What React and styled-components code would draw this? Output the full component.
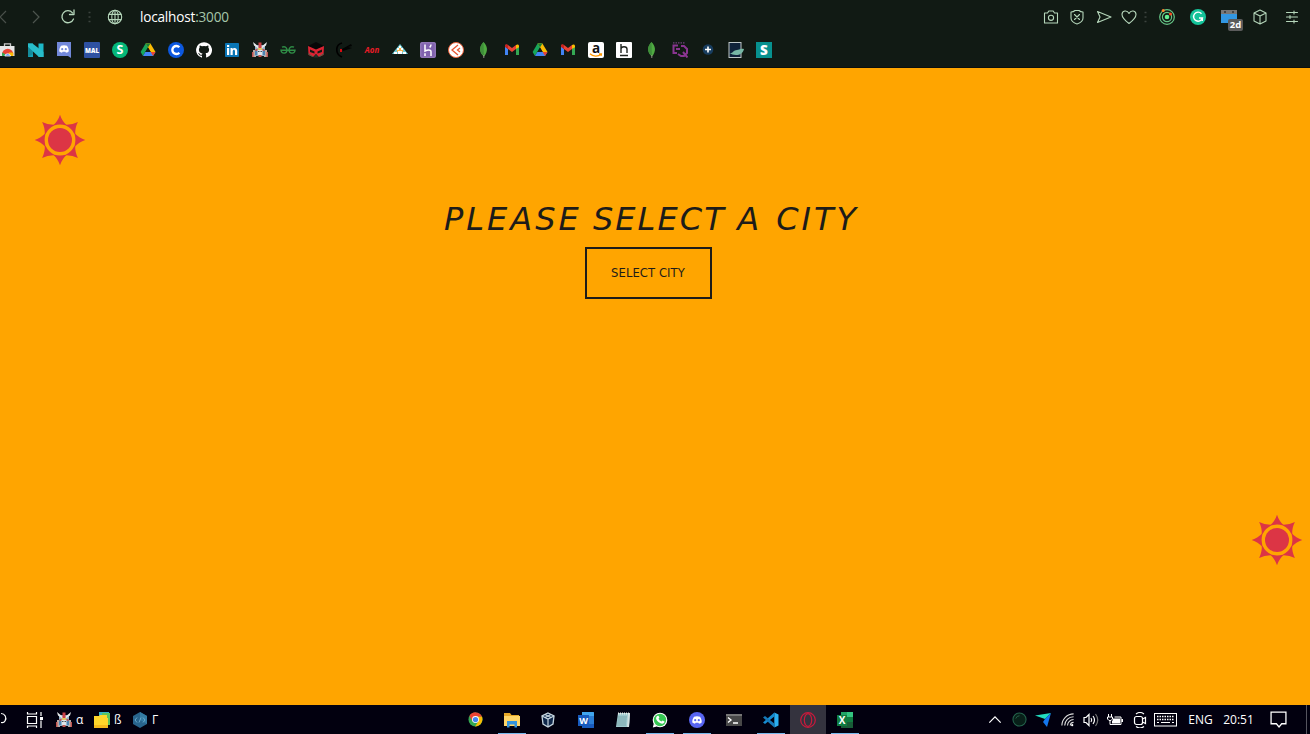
import React from "react";
import styled, { createGlobalStyle } from "styled-components";

const GlobalStyle = createGlobalStyle`
  * { box-sizing: border-box; }
  body { margin: 0; overflow: hidden; font-family: "Open Sans", "Noto Sans", sans-serif; }
  svg { display: block; flex: none; }
`;

const Screen = styled.div`
  width: 1310px;
  height: 734px;
  display: flex;
  flex-direction: column;
  overflow: hidden;
  background: #ffa500;
`;

const BrowserBar = styled.header`
  height: 68px;
  flex: none;
  background: #111a14;
  border-bottom: 1px solid #0c0f0c;
`;

const AddressRow = styled.div`
  height: 34px;
  display: flex;
  align-items: center;
  color: #b5d6ba;
`;

const Slot = styled.span`
  width: ${(p) => p.$w}px;
  flex: none;
  display: flex;
  align-items: center;
  justify-content: ${(p) => (p.$end ? "flex-end" : "center")};
`;

const Url = styled.div`
  flex: 1;
  padding-left: 18px;
  font-size: 13.6px;
  line-height: 20px;
  letter-spacing: -0.2px;
  color: #a5c6aa;
  b { font-weight: 400; color: #fff; }
`;

const BadgeWrap = styled.span`
  position: relative;
  width: 16px;
  height: 16px;
`;

const Badge = styled.span`
  position: absolute;
  left: 7px;
  top: 10px;
  width: 15px;
  height: 12px;
  border-radius: 2px;
  background: #5b5b5b;
  color: #fff;
  font: 700 9.5px/12px "Open Sans", sans-serif;
  text-align: center;
`;

const Bookmarks = styled.nav`
  height: 32px;
  display: flex;
  align-items: center;
  gap: 12px;
`;

const Page = styled.main`
  flex: 1;
  display: flex;
  flex-direction: column;
  padding: 46px 7px 0 34px;
  background: #ffa500;
`;

const Prompt = styled.section`
  display: flex;
  flex-direction: column;
  align-items: center;
  padding: 29px 14px 0 0;
  margin-left: -27px;
  height: 348px;
  color: #1d1c19;
`;

const Title = styled.h1`
  margin: 0;
  padding-left: 7px;
  height: 52px;
  font: italic 400 32px/48px "DejaVu Sans", sans-serif;
  letter-spacing: 3px;
  word-spacing: -2px;
  white-space: nowrap;
`;

const Word = styled.span`
  letter-spacing: ${(p) => p.$track}px;
  margin-left: ${(p) => p.$gap || 0}px;
`;

const CityButton = styled.button`
  width: 127px;
  height: 52px;
  border: 2px solid #1d1c19;
  background: transparent;
  color: #1d1c19;
  padding: 0;
  font: 400 11.6px/16px "DejaVu Sans", sans-serif;
  letter-spacing: 0.08px;
`;

const SunRow = styled.div`
  display: flex;
  justify-content: ${(p) => (p.$end ? "flex-end" : "flex-start")};
`;

const Taskbar = styled.footer`
  height: 29px;
  flex: none;
  display: flex;
  background: #02000f;
  color: #fff;
`;

const TaskLeft = styled.div`
  width: 457px;
  display: flex;
  align-items: center;
  font-size: 12px;
`;

const TaskLabel = styled.span`
  width: ${(p) => p.$w}px;
  padding-left: 4px;
  line-height: 16px;
`;

const Apps = styled.div`
  display: flex;
  gap: 1px;
  width: 526px;
`;

const AppButton = styled.div`
  width: 36px;
  height: 29px;
  display: flex;
  align-items: center;
  justify-content: center;
  background: ${(p) => (p.$active ? "#34333e" : "transparent")};
  &::after {
    content: "";
    display: ${(p) => (p.$open ? "block" : "none")};
    width: 28px;
    height: 1px;
    margin-left: -22px;
    margin-right: -6px;
    align-self: flex-end;
    background: #76b9ed;
  }
`;

const Tray = styled.div`
  flex: 1;
  display: flex;
  align-items: center;
  font-size: 12px;
  white-space: nowrap;
`;

const Edge = styled.span`
  margin-left: auto;
  margin-right: 3px;
  width: 1px;
  height: 29px;
  background: #55545e;
`;

const Icon = ({ size = 16, w, h, box, children, ...rest }) => (
  <svg width={w || size} height={h || size} viewBox={box || "0 0 16 16"} fill="none" {...rest}>
    {children}
  </svg>
);

const Line = ({ children, size = 16, ...rest }) => (
  <Icon size={size} stroke="currentColor" strokeWidth="1.1" strokeLinecap="round" strokeLinejoin="round" {...rest}>
    {children}
  </Icon>
);

const Letter = ({ x = 8, y, size, fill = "#fff", weight = 700, family = "Open Sans", children, ...rest }) => (
  <text x={x} y={y} fontSize={size} fill={fill} stroke="none" fontWeight={weight} fontFamily={`${family}, sans-serif`} textAnchor="middle" {...rest}>
    {children}
  </text>
);

const Sun = () => (
  <svg width="52" height="52" viewBox="-26 -26 52 52">
    {[0, 45, 90, 135, 180, 225, 270, 315].map((a) => (
      <path key={a} transform={`rotate(${a})`} d="M0 -25.3Q2 -19 7 -14.5H-7Q-2 -19 0 -25.3Z" fill="#dc3545" />
    ))}
    <circle r="15.4" fill="#ffa500" />
    <circle r="12" fill="#dc3545" />
  </svg>
);

const Robot = ({ size = 16 }) => (
  <Icon size={size}>
    <path d="M1 8h3v7H1zM12 8h3v7h-3z" fill="#b9a9a4" />
    <path d="M3 3h10v11H3z" fill="#8fb2c9" />
    <path d="M3 8h3v5H3zM10 8h3v5h-3z" fill="#4d86b4" />
    <path d="M1 0l6 5v2L2 3.500zM15 0L9 5v2l5-3.500z" fill="#e6e9ea" />
    <path d="M6.500 .500h3V6h-3z" fill="#cc4146" />
    <path d="M3.500 7h2v2h-2zM10.500 7h2v2h-2zM6.500 12h3v3h-3zM0 10h1.500v5H0zM14.500 10H16v5h-1.500z" fill="#c25450" />
    <path d="M5.500 6h5l-1 2h-3z" fill="#e8c35e" />
    <path d="M5.500 8h5v5h-5z" fill="#dfe5e8" />
    <path d="M6 9h1.500v1H6zM8.500 9H10v1H8.500z" fill="#47505a" />
  </Icon>
);

const Drive = () => (
  <Icon>
    <path d="M5.6 1.5h4.8L8 5.6 3 14 .6 10z" fill="#16a65b" />
    <path d="M5.6 1.5h4.8L15.5 10h-4.8z" fill="#fbbc04" />
    <path d="M5.6 1.5h4.8L8 5.6z" fill="#188038" />
    <path d="M5.3 10h10.2L13 14H3z" fill="#4285f4" />
    <path d="M10.7 10h4.8L13 14z" fill="#ea4335" />
    <path d="M8 5.6l2.7 4.4H5.3z" fill="#111a14" />
  </Icon>
);

const Gmail = () => (
  <Icon>
    <path d="M1 4v9h3V7z" fill="#4285f4" />
    <path d="M12 7v6h3V4z" fill="#34a853" />
    <path d="M1 3.8C1 2.3 2.8 2 4 3l4 3 4-3v4l-4 3-4-3z" fill="#ea4335" />
    <path d="M1 3.8C1 2.8 2 2.2 3 2.5l1 .6V7L1 5z" fill="#c5221f" />
    <path d="M12 3c1.3-1 3-.6 3 1v1.3L12 7z" fill="#fbbc04" />
  </Icon>
);

const Leaf = () => (
  <Icon>
    <path d="M7.500 0C11.500 4 12.500 9 8 14.500 2.500 10 3.300 4.400 7.500 0z" fill="#4faa41" />
    <path d="M7.500 0C3.300 4.400 2.500 10 8 14.500z" fill="#3f8f3a" />
    <path d="M7.800 13v3" stroke="#b1aaa0" strokeWidth=".8" />
  </Icon>
);

const discordFace = "M5 4.8C6.8 4 9.2 4 11 4.8c1.4 2 1.9 3.8 1.7 5.7-1 .9-1.8 1.1-2.7 1.2l-.6-1H6.6l-.6 1c-.9-.1-1.8-.4-2.7-1.2-.1-2 .4-3.8 1.7-5.7z";

const bookmarkIcons = [
  <Icon>
    <path d="M0 4h14.5v10H0z" fill="#e6e6e6" />
    <path d="M4.5 4V1.8h6V4" stroke="#c8c8c8" strokeWidth="1.3" />
    <path d="M2 12.500a5.700 5.700 0 0111.400 0z" fill="#ea4335" />
    <path d="M2 14V10.500l3 1.500v2z" fill="#34a853" />
    <path d="M9 10.500h4.200L13.400 14H8z" fill="#fbbc04" />
    <path d="M4.8 14a3 3 0 015.8 0z" fill="#4285f4" stroke="#fff" strokeWidth=".8" />
  </Icon>,
  <Icon>
    <path d="M0 1.500h5V15H0z" fill="#16a3b5" />
    <path d="M10.500 1.500h5V15h-5z" fill="#1db9c8" />
    <path d="M0 1.500h4.500L15.500 10v5H11L0 5z" fill="#28bdca" />
    <path d="M0 5l5 4.600V12L0 15z" fill="#158b9a" />
  </Icon>,
  <Icon>
    <path d="M1 0h14v16l-3-2H1z" fill="#7289da" />
    <path transform="translate(0 -1)" d={discordFace} fill="#fff" />
    <circle cx="6.2" cy="7.2" r="1.1" fill="#7289da" /><circle cx="9.8" cy="7.2" r="1.1" fill="#7289da" />
  </Icon>,
  <Icon><rect width="16" height="16" rx="1" fill="#2e51a2" /><Letter y="10.6" size="7.2" weight={800} textLength="14" lengthAdjust="spacingAndGlyphs">MAL</Letter></Icon>,
  <Icon><circle cx="8" cy="8" r="8" fill="#05b779" /><Letter y="12.4" size="12.5">S</Letter></Icon>,
  <Drive />,
  <Icon><circle cx="8" cy="8" r="8" fill="#0c58df" /><path d="M11.3 5.3A4 4 0 1011.3 10.7" stroke="#fff" strokeWidth="2.4" /></Icon>,
  <Icon>
    <path fill="#fff" d="M8 .2A7.9 7.9 0 005.5 15.6c.4.1.5-.2.5-.4v-1.5c-2.2.5-2.7-.9-2.7-.9-.4-.9-.9-1.2-.9-1.2-.7-.5.1-.5.1-.5.8.1 1.2.8 1.2.8.7 1.2 1.900.9 2.300.7.1-.5.3-.9.5-1.100-1.800-.2-3.600-.9-3.600-3.900 0-.9.3-1.600.8-2.100-.1-.2-.4-1 .1-2.100 0 0 .7-.2 2.200.8a7.500 7.500 0 014 0c1.500-1 2.200-.8 2.200-.8.5 1.100.2 1.900.1 2.100.5.5.8 1.200.8 2.100 0 3-1.800 3.700-3.600 3.900.3.300.6.800.6 1.500v2.200c0 .2.1.5.5.4A7.900 7.900 0 008 .2z" />
  </Icon>,
  <Icon><rect x="1" y="1" width="14" height="14" rx=".8" fill="#0a76b6" /><path d="M3 6h2.2v7H3zM3 3h2.2v2H3zM6.500 6h2v1c1.300-2 4.700-1.300 4.700 2v4H11V9.600C11 7 8.700 7.400 8.700 9.500V13H6.500z" fill="#fff" /></Icon>,
  <Robot />,
  <Icon stroke="#2f8d46" strokeWidth="1.4"><path d="M2 5.200C4.500 4 7 5 7 8c0 4-5.600 4.300-6 .3h14C14.600 12.300 9 12 9 8c0-3 2.500-4 5-2.800" /></Icon>,
  <Icon>
    <path d="M0 4l8-4 8 4-8 4z" fill="#060707" />
    <path d="M0 4l8 3.500V12l-3 3-4.500-2zM16 4L8 7.500V12l3 3 4.500-2z" fill="#dc2433" />
    <path d="M2 7.500l4.500 2v2L2 10zM14 7.500l-4.500 2v2L14 10z" fill="#111a14" />
    <path d="M5.500 15.500L8 12l2.500 3.500z" fill="#26302a" />
    <path d="M0 11.500l5 3.300M16 11.500l-5 3.300" stroke="#247450" strokeWidth=".8" />
  </Icon>,
  <Icon><path d="M6 1C-1 3-1 12 6 15" stroke="#000" strokeWidth="1.7" /><path d="M6 7l9-5 1 2-4 1 4 1-9 3z" fill="#020302" /><path d="M4 7h2v3H4z" fill="#d70d12" /></Icon>,
  <Icon overflow="visible"><Letter y="11.300" size="9" fill="#eb1c27" weight={700} fontStyle="italic" textLength="14.500" lengthAdjust="spacingAndGlyphs">Aon</Letter></Icon>,
  <Icon><path d="M8 2l8 10H0z" fill="#6dcbd4" /><path d="M7 4h2v2H7zM5 6h2v2H5zM9 6h2v2H9zM2 10h3v2H2zM11 10h3v2h-3z" fill="#fff" /><path d="M7 6h2v4H7zM5 8h6v2H5z" fill="#f5b44b" /><path d="M6 9h4v3H6z" fill="#fff" /></Icon>,
  <Icon><rect width="16" height="16" rx="2" fill="#8062ad" /><rect x=".8" y=".8" width="14.4" height="14.4" rx="1" stroke="#a48cc3" strokeWidth=".7" /><path d="M5 2.500v6.500c2-1 6-2 6 .7V14M11 2.500c0 1.300-.6 2.100-1.300 3M5 11.300V14" stroke="#fff" strokeWidth="1.500" /></Icon>,
  <Icon><circle cx="8" cy="8" r="7.500" fill="#fff" stroke="#ed633c" /><path d="M10 3L4 8l6 5M12 6L9.500 8l2.500 2" stroke="#e65531" strokeWidth="1.300" /></Icon>,
  <Leaf />,
  <Gmail />,
  <Drive />,
  <Gmail />,
  <Icon overflow="visible"><rect width="16" height="16" rx="2" fill="#fff" /><Letter y="10.500" size="13.500" fill="#111">a</Letter><path d="M2 11.800c3 3 8 3.200 11 .4M11 11.800l2.400.1-.3 2" stroke="#ff9900" strokeWidth="1.300" /></Icon>,
  <Icon><rect width="16" height="16" rx="1" fill="#fff" /><path d="M5 2v9M5 7c0-3 6-3 6 0v4M4 13.500h8" stroke="#202520" strokeWidth="1.400" /></Icon>,
  <Leaf />,
  <Icon stroke="#893590" strokeWidth="2"><path d="M6 3.500H1.500V11H5M4 7h4M9 4h3l3 3v4l-3 3H9l-3-2M11 10l4.500 5.500" /><path d="M1 .8h12" strokeDasharray="1.500 1" stroke="#70417c" strokeWidth="1.300" /></Icon>,
  <Icon><circle cx="8" cy="7.500" r="5.300" fill="#173c5e" /><path d="M8 4.500v6M5 7.500h6" stroke="#fff" strokeWidth="1.600" /></Icon>,
  <Icon><rect x="1" y=".5" width="12" height="15" fill="#10233a" stroke="#bdc6c6" /><path d="M1 11c4 1 4-3 8-3 2 0 3-2 7-1-1 4-4 6-8 6-3 0-4-1-7-2z" fill="#77b8a5" /></Icon>,
  <Icon overflow="visible"><rect width="16" height="16" fill="#07918f" /><Letter y="12.700" size="13.500" weight={800}>S</Letter></Icon>,
];

const Camera = () => <Line><path d="M1.500 4h3l1.300-2h4.400l1.300 2h3v10h-13z" /><circle cx="8" cy="8.800" r="2.600" /></Line>;
const Shield = () => <Line><path d="M2 3c2 0 3.500-1 4-1.500h4C10.500 2 12 3 14 3v6c0 3-3 5-6 6-3-1-6-3-6-6zM5.500 5.500l5 5M10.500 5.500l-5 5" /></Line>;
const Send = () => <Line><path d="M1.500 2.500L15 8 1.500 13.500 4 8z" /></Line>;
const Heart = () => <Line><path d="M8 14.500C4 11.500 1 9 1 5.500 1 1.500 6 .500 8 4.500 10 .500 15 1.500 15 5.500c0 3.500-3 6-7 9z" /></Line>;
const Dots = () => <Icon w={3} h={12} box="0 0 3 12"><path d="M.500 1.500h2M.500 6h2M.500 10.500h2" stroke="#3c433e" strokeWidth="1.500" /></Icon>;
const Globe = () => <Line><circle cx="8" cy="8" r="6.700" /><ellipse cx="8" cy="8" rx="3.200" ry="6.700" /><path d="M8 1.300v13.400M2 5.400h12M2 10.600h12" /></Line>;
const Orbit = () => (
  <Icon><circle cx="8" cy="8" r="7.300" stroke="#65c486" strokeWidth="1.200" /><circle cx="8" cy="8" r="4.600" stroke="#65c486" strokeWidth="1.200" /><circle cx="8" cy="8" r="2.300" fill="#63ef93" /><circle cx="4.200" cy="1.500" r="1.500" fill="#ff842a" /><circle cx="11.500" cy="5" r="1.500" fill="#ff4e23" /></Icon>
);
const Grammar = () => <Icon><circle cx="8" cy="8" r="8" fill="#15c39a" /><path d="M11.500 4.700A4.500 4.500 0 1012.400 9H9M12.400 9l-.100 3" stroke="#fff" strokeWidth="1.400" /></Icon>;
const Cube = () => <Line><path d="M8 1l6 3v8l-6 3-6-3V4zM2 4l6 3 6-3M8 7v8" /></Line>;
const Sliders = () => <Line><path d="M2.500 3.500h11M2.500 8h11M2.500 12.500h11M10 2v3M6 6.500v3M10 11v3" /></Line>;

const apps = [
  { icon: <Icon size={15}><circle cx="8" cy="8" r="7.500" fill="#34a853" /><path d="M1.500 4.300A7.500 7.500 0 0115 5H8L5 10z" fill="#ea4335" /><path d="M8 5h7c1.500 5-1.500 10.500-7.500 10.500L11 10z" fill="#fbbc04" /><circle cx="8" cy="8" r="3.700" fill="#fff" /><circle cx="8" cy="8" r="2.800" fill="#4285f4" /></Icon> },
  { open: true, icon: <Icon><path d="M0 1h6l1.500 2H15v5H0z" fill="#e6a828" /><path d="M0 4h16v10H0z" fill="#ffd568" /><path d="M3 15.500V9h10v6.500h-2.500v-3h-5v3z" fill="#3493dc" /></Icon> },
  { icon: <Icon style={{ marginRight: 2 }}><path d="M8 1l6 3-1 8-5 3-5-3-1-8z" fill="#10284b" stroke="#c7d6e0" strokeWidth="1.300" /><path d="M2 4l6 3 6-3M8 7v8M5 2.500l6 3M11 2.500l-6 3" stroke="#c7d6e0" strokeWidth="1.200" /></Icon> },
  { icon: <Icon><rect x="4" width="12" height="16" rx="1" fill="#2b7cd3" /><path d="M4 4h12V1q0-1-1-1H4z" fill="#41a5ee" /><path d="M4 12h12v3q0 1-1 1H4z" fill="#185abd" /><rect y="3" width="11" height="11" fill="#185abd" /><Letter x={5.500} y="11.800" size="9">W</Letter></Icon> },
  { icon: <Icon><path d="M3 1h12l-1 14H1z" fill="#9fc9ce" /><path d="M13 1h2l-1 14h-2z" fill="#d3dfdf" /><path d="M3 5h9M2.600 7h9M2.300 9h9M2 11h9M2 13h9" stroke="#658f95" strokeWidth=".600" /><path d="M3 1.500h12" stroke="#ecece9" strokeDasharray="1 1" strokeWidth="2" /></Icon> },
  { open: true, icon: <Icon><circle cx="8" cy="8" r="7.300" fill="#fff" /><path d="M.800 15.500l1-4 3 3z" fill="#fff" /><circle cx="8" cy="8" r="6.200" fill="#36c653" /><path d="M5 4l1.500-.2.900 2-.9 1q1 2 3 2.800l1-1.100 2 1.100c-.2 2-2 2.600-4 1.700C6 10 4 8 4 6z" fill="#fff" /></Icon> },
  { open: true, icon: <Icon><circle cx="8" cy="8" r="8" fill="#5865f2" /><path d={discordFace} fill="#fff" /><circle cx="6.200" cy="8.200" r="1.100" fill="#5865f2" /><circle cx="9.800" cy="8.200" r="1.100" fill="#5865f2" /></Icon> },
  { icon: <Icon><rect y="2" width="16" height="12" fill="#484848" /><path d="M0 2h16v2H0z" fill="#777" /><path d="M2 5.500l3 2.500-3 2.500M7 11h5" stroke="#fff" strokeWidth="1.400" /></Icon> },
  { open: true, icon: <Icon><path d="M11.300.500L15.500 2.500v11l-4.200 2z" fill="#2bafef" /><path d="M11.300.500v4L2 12 0 10.500z" fill="#168cd1" /><path d="M11.300 15.500v-4L2 4 0 5.500z" fill="#1679b8" /></Icon> },
  { active: true, icon: <Icon stroke="#c91a3c"><circle cx="8" cy="8" r="7.300" strokeWidth="1.200" /><ellipse cx="8" cy="8" rx="3.700" ry="6.300" strokeWidth="1.200" /></Icon> },
  { open: true, icon: <Icon><rect x="4" width="12" height="16" fill="#21a366" /><path d="M10 0h6v5h-6z" fill="#33c481" /><path d="M4 10h12v6H4z" fill="#185c37" /><path d="M10 5h6v5h-6z" fill="#107c41" /><rect y="3" width="10" height="11" fill="#107c41" /><Letter x={5} y="12" size="10">X</Letter></Icon> },
];

export default function App() {
  return (
    <>
      <GlobalStyle />
      <Screen>
        <BrowserBar>
          <AddressRow>
            <Slot $w={7}><Icon w={7} h={16} box="0 0 7 16" stroke="#49504a" strokeWidth="1.200"><path d="M6 2L0 8l6 6" /></Icon></Slot>
            <Slot $w={57}><Icon stroke="#4d554e" strokeWidth="1.200"><path d="M5 2l6 6-6 6" /></Icon></Slot>
            <Slot $w={7}><Line strokeWidth="1.300"><path d="M13.500 10A6 6 0 1112.500 3.800M14 1v4.500H9.500" /></Line></Slot>
            <Slot $w={37}><Dots /></Slot>
            <Slot $w={14}><Globe /></Slot>
            <Url><b>localhost</b>:3000</Url>
            <Slot $w={26}><Camera /></Slot>
            <Slot $w={26}><Shield /></Slot>
            <Slot $w={27}><Send /></Slot>
            <Slot $w={24}><Heart /></Slot>
            <Slot $w={9}><Dots /></Slot>
            <Slot $w={33}><Orbit /></Slot>
            <Slot $w={30}><Grammar /></Slot>
            <Slot $w={32}>
              <BadgeWrap>
                <Icon><path d="M0 5h16v9H0z" fill="#3297e2" /><path d="M0 1h16v4H0z" fill="#777" /><path d="M3 3h2M11 3h2" stroke="#333" strokeWidth="1.500" /></Icon>
                <Badge>2d</Badge>
              </BadgeWrap>
            </Slot>
            <Slot $w={29}><Cube /></Slot>
            <Slot $w={36}><Sliders /></Slot>
          </AddressRow>
          <Bookmarks>
            {bookmarkIcons.map((icon, i) => <React.Fragment key={i}>{icon}</React.Fragment>)}
          </Bookmarks>
        </BrowserBar>

        <Page>
          <SunRow><Sun /></SunRow>
          <Prompt>
            <Title>
              PLEASE <Word $track={2.1}>SELECT</Word> A <Word $track={3} $gap={3}>CITY</Word>
            </Title>
            <CityButton>SELECT CITY</CityButton>
          </Prompt>
          <SunRow $end><Sun /></SunRow>
        </Page>

        <Taskbar>
          <TaskLeft>
            <Slot $w={26}><Icon w={26} h={16} box="0 0 26 16" stroke="#fff" strokeWidth="1.200"><path d="M0 1.500a4.800 4.800 0 014 7.500q-1 2-4 1.500" transform="translate(1 0)" /></Icon></Slot>
            <Slot $w={17}><Icon w={17} h={16} box="0 0 17 16" stroke="#fff" strokeWidth="1.200"><path d="M1.500 0v2h9V0M1.500 16v-2h9v2M1.500 4.500h9v7h-9zM15 0v4M15 8.500V16" /><path d="M14 5h3v3h-3z" fill="#fff" stroke="none" /></Icon></Slot>
            <Slot $w={29} $end><Robot /></Slot>
            <TaskLabel $w={22}>α</TaskLabel>
            <Icon><path d="M5 0h10v13H5z" fill="#39b5c5" /><path d="M8 1h8v12H8z" fill="#5cc55c" /><path d="M0 4h5l1-1h7v3h1v9H0z" fill="#ffd62b" /><path d="M0 13h14v3H0z" fill="#f5ba1c" /></Icon>
            <TaskLabel $w={22}>ß</TaskLabel>
            <Icon><path d="M8 0l7 4v8l-7 4-7-4V4z" fill="#28648d" /><path d="M8 0l7 4v8l-7-4z" fill="#347ba4" /><path d="M5 5.500L3 8l2 2.500M11 5.500L13 8l-2 2.500M9 5.500l-2 5" stroke="#67a7cb" /></Icon>
            <TaskLabel $w={22}>Г</TaskLabel>
          </TaskLeft>
          <Apps>
            {apps.map((a, i) => <AppButton key={i} $open={a.open} $active={a.active}>{a.icon}</AppButton>)}
          </Apps>
          <Tray>
            <Slot $w={24}><Icon size={14} stroke="#fff" strokeWidth="1.400"><path d="M1.500 11L8 4.500l6.500 6.500" /></Icon></Slot>
            <Slot $w={24}><Icon size={15}><circle cx="8" cy="8" r="7" fill="#082019" stroke="#25644d" strokeWidth="1.100" /><path d="M4 7q1-3 4-3" stroke="#28624d" /></Icon></Slot>
            <Slot $w={23}><Icon><path d="M0 3.500L16 1 10 7z" fill="#21ddc0" /><path d="M16 1l-4 14-4-5 2-3z" fill="#1477ef" /></Icon></Slot>
            <Slot $w={26}><Icon size={15} stroke="#ddd" strokeWidth="1.200"><path d="M2 14.500A12.500 12.500 0 0114.500 2M5 14.500A9.500 9.500 0 0114.500 5M8 14.500A6.500 6.500 0 0114.500 8M11 14.500a3.500 3.500 0 013.500-3.500" /><circle cx="13" cy="14" r="1.200" fill="#fff" stroke="none" /></Icon></Slot>
            <Slot $w={21}><Icon stroke="#fff" strokeWidth="1.200"><path d="M1 5.500h2l3-3v11l-3-3H1zM8 6q1.500 2 0 4M10 4q3 4 0 8" /><path d="M12.500 2q4.500 6 0 12" stroke="#777" /></Icon></Slot>
            <Slot $w={28}><Icon stroke="#fff"><path d="M1.500 2v3M4.500 2v3M.500 5h5v2l-1.500 1.500H2L.500 7zM3 9v3.500h11V5H7.500" /><path d="M6 6.500h7v5H5V8.500h1zM14.500 7H16v3h-1.500z" fill="#fff" stroke="none" /></Icon></Slot>
            <Slot $w={22}><Icon stroke="#fff" strokeWidth="1.200"><rect x="2.500" y="4.500" width="8" height="8" rx="2" /><path d="M10.500 7l3-1.500v6l-3-1.500M4 2q4-3 8 0M4 14.500q4 3 8 0" /></Icon></Slot>
            <Slot $w={29}><Icon w={23} h={14} box="0 0 23 14" stroke="#fff"><rect x=".500" y=".500" width="22" height="12.500" /><path d="M3 3.500h17M3 6.500h17" strokeDasharray="1.500 1" strokeWidth="1.300" /><path d="M3 9.500h2M7 9.500h9M18 9.500h2" /></Icon></Slot>
            <Slot $w={41}>ENG</Slot>
            <Slot $w={35}>20:51</Slot>
            <Slot $w={44}><Icon size={17} stroke="#fff" strokeWidth="1.200"><path d="M1 1h14v11h-4l-2.500 3L6 12H1z" /></Icon></Slot>
            <Edge />
          </Tray>
        </Taskbar>
      </Screen>
    </>
  );
}
